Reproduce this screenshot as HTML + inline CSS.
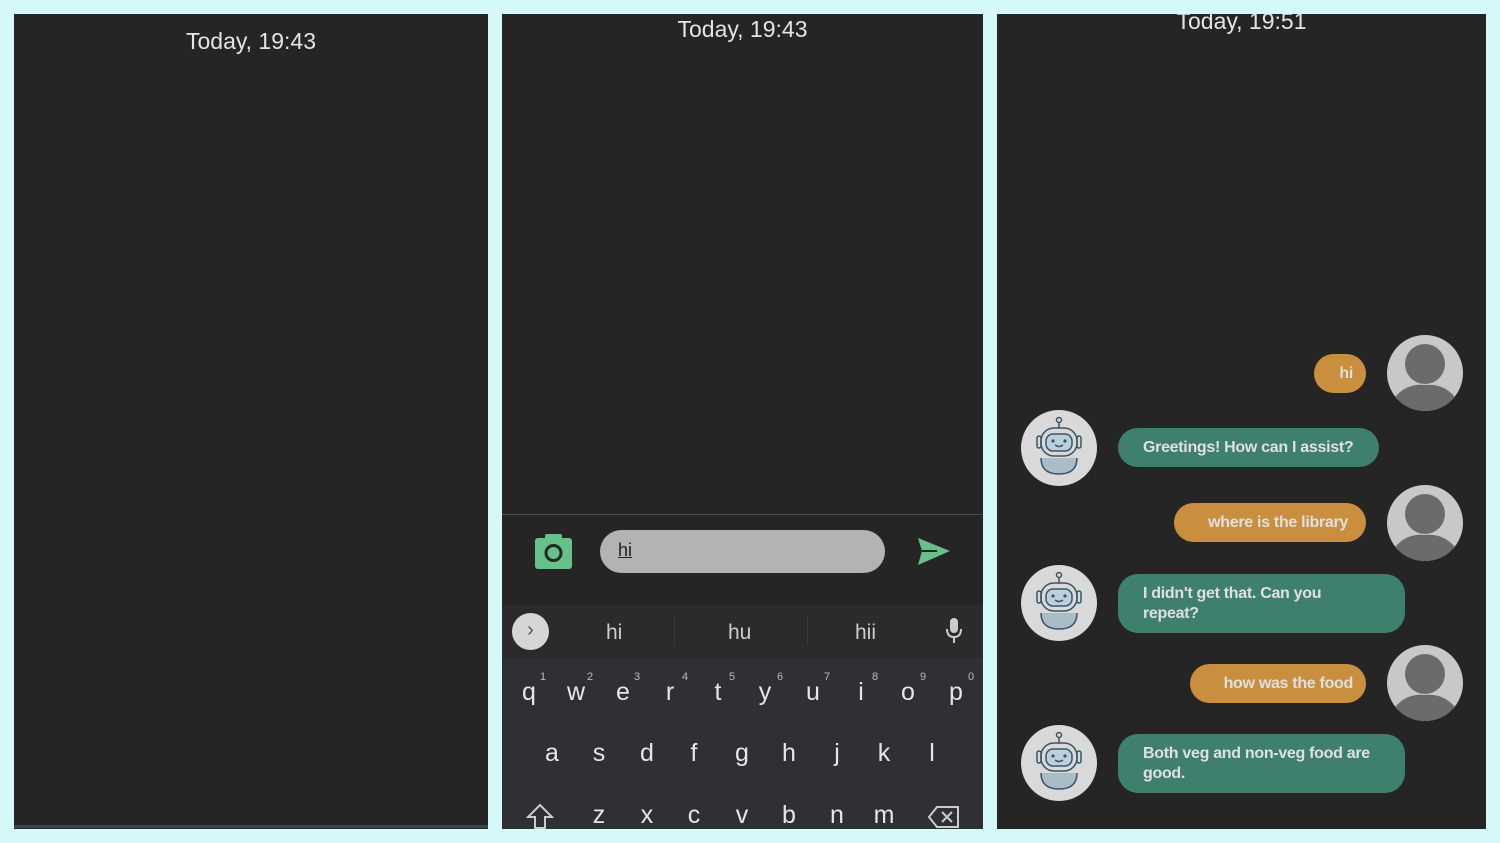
<!DOCTYPE html><html><head><style>
*{margin:0;padding:0;box-sizing:border-box}
body{width:1500px;height:843px;background:#d5f8f8;position:relative;overflow:hidden;font-family:"Liberation Sans",Roboto,sans-serif}
.p{position:absolute;background:#252525;overflow:hidden}
.a{position:absolute}
.t{position:absolute;color:#e4e4e4;font-size:23px;width:100%;text-align:center}
.b{position:absolute;border-radius:20px;color:#e0e0e0;font-weight:bold;font-size:16px;letter-spacing:-0.3px;padding:0 25px;display:flex;align-items:center;line-height:20px}
.o{background:#c98f3e;justify-content:flex-end}
.g{background:#3f7f6e}
.k{position:absolute;color:#e6e6e6;font-size:25px;width:30px;text-align:center}
.n{position:absolute;color:#bbb;font-size:11px}
</style></head><body>
<div class="p" style="left:14px;top:14px;width:474px;height:815px">
<div class="t" style="top:14px">Today, 19:43</div>
<div class="a" style="left:0;top:811px;width:474px;height:3px;background:#3a4644"></div>
</div>
<div class="p" style="left:502px;top:14px;width:481px;height:815px">
<div class="t" style="top:2px">Today, 19:43</div>
<div class="a" style="left:0;top:500px;width:481px;height:1px;background:#3d5a50"></div>
<svg class="a" style="left:33px;top:520px" width="38" height="36" viewBox="0 0 38 36"><rect x="0" y="4" width="37" height="31" rx="3" fill="#68c08a"/><rect x="10" y="0" width="17" height="7" rx="2" fill="#68c08a"/><circle cx="18.5" cy="19" r="7.5" fill="none" stroke="#1f2a22" stroke-width="3"/></svg>
<div class="a" style="left:98px;top:516px;width:285px;height:43px;border-radius:22px;background:#b3b3b3"></div>
<div class="a" style="left:116px;top:526px;font-size:18px;color:#222;text-decoration:underline">hi</div>
<svg class="a" style="left:415px;top:523px" width="34" height="30" viewBox="0 0 34 30"><path d="M1 1 L33 14 L1 28 L5 14 Z" fill="#68c08a"/><path d="M5 14 H20" stroke="#252525" stroke-width="2"/></svg>
<div class="a" style="left:0;top:591px;width:481px;height:53px;background:#2b2b2d"></div>
<div class="a" style="left:0;top:644px;width:481px;height:171px;background:#2e3034"></div>
<div class="a" style="left:10px;top:599px;width:37px;height:37px;border-radius:50%;background:#d6d6d6;color:#555;font-size:20px;text-align:center;line-height:35px">&#x203A;</div>
<div class="a" style="left:104px;top:607px;color:#ccc;font-size:21px">hi</div>
<div class="a" style="left:226px;top:607px;color:#ccc;font-size:21px">hu</div>
<div class="a" style="left:353px;top:607px;color:#ccc;font-size:21px">hii</div>
<div class="a" style="left:172px;top:603px;width:1px;height:28px;background:#3c3c3e"></div>
<div class="a" style="left:305px;top:603px;width:1px;height:28px;background:#3c3c3e"></div>
<svg class="a" style="left:443px;top:603px" width="18" height="28" viewBox="0 0 18 28"><rect x="5" y="1" width="8" height="15" rx="4" fill="#ccc"/><path d="M2 12 Q2 20 9 20 Q16 20 16 12 M9 20 V26" fill="none" stroke="#ccc" stroke-width="2"/></svg>
<div class="k" style="left:12px;top:664px">q</div><div class="n" style="left:38px;top:657px">1</div>
<div class="k" style="left:59px;top:664px">w</div><div class="n" style="left:85px;top:657px">2</div>
<div class="k" style="left:106px;top:664px">e</div><div class="n" style="left:132px;top:657px">3</div>
<div class="k" style="left:153px;top:664px">r</div><div class="n" style="left:180px;top:657px">4</div>
<div class="k" style="left:201px;top:664px">t</div><div class="n" style="left:227px;top:657px">5</div>
<div class="k" style="left:248px;top:664px">y</div><div class="n" style="left:275px;top:657px">6</div>
<div class="k" style="left:296px;top:664px">u</div><div class="n" style="left:322px;top:657px">7</div>
<div class="k" style="left:344px;top:664px">i</div><div class="n" style="left:370px;top:657px">8</div>
<div class="k" style="left:391px;top:664px">o</div><div class="n" style="left:418px;top:657px">9</div>
<div class="k" style="left:439px;top:664px">p</div><div class="n" style="left:466px;top:657px">0</div>
<div class="k" style="left:35px;top:725px">a</div><div class="k" style="left:82px;top:725px">s</div><div class="k" style="left:130px;top:725px">d</div><div class="k" style="left:177px;top:725px">f</div><div class="k" style="left:225px;top:725px">g</div><div class="k" style="left:272px;top:725px">h</div><div class="k" style="left:320px;top:725px">j</div><div class="k" style="left:367px;top:725px">k</div><div class="k" style="left:415px;top:725px">l</div>
<div class="k" style="left:82px;top:787px">z</div><div class="k" style="left:130px;top:787px">x</div><div class="k" style="left:177px;top:787px">c</div><div class="k" style="left:225px;top:787px">v</div><div class="k" style="left:272px;top:787px">b</div><div class="k" style="left:320px;top:787px">n</div><div class="k" style="left:367px;top:787px">m</div>
<svg class="a" style="left:24px;top:789px" width="28" height="26" viewBox="0 0 28 26"><path d="M14 2 L26 14 H19 V25 H9 V14 H2 Z" fill="none" stroke="#ccc" stroke-width="2"/></svg>
<svg class="a" style="left:425px;top:791px" width="34" height="24" viewBox="0 0 34 24"><path d="M10 2 H31 V22 H10 L2 12 Z" fill="none" stroke="#ccc" stroke-width="2"/><path d="M15 7 L25 17 M25 7 L15 17" stroke="#ccc" stroke-width="2"/></svg>
</div>
<div class="p" style="left:997px;top:14px;width:489px;height:815px">
<div class="t" style="top:-6px">Today, 19:51</div>
</div>
<svg width="0" height="0" style="position:absolute"><defs>
<g id="u"><circle cx="38" cy="38" r="38" fill="#c8c8c8"/><circle cx="38" cy="29" r="20" fill="#6b6b6b"/><path d="M8 62 Q20 48 38 50 Q56 48 68 62 Q55 76 38 76 Q21 76 8 62Z" fill="#6b6b6b"/></g>
<g id="r"><circle cx="38" cy="38" r="38" fill="#d9d9d9"/><g fill="none" stroke="#3b5566" stroke-width="1.5"><circle cx="38" cy="10" r="2.5"/><path d="M38 12.5 V18"/><path d="M20 48 Q20 64 38 64 Q56 64 56 48" fill="#a9bcc8"/><rect x="20" y="18" width="36" height="28" rx="13" fill="#d9d9d9"/><rect x="25" y="24" width="26" height="17" rx="7" fill="#bcd0dc"/><path d="M34 35 Q38 38 42 35"/><rect x="16" y="26" width="4" height="12" rx="2"/><rect x="56" y="26" width="4" height="12" rx="2"/></g><circle cx="32" cy="31" r="1.6" fill="#3b5566"/><circle cx="44" cy="31" r="1.6" fill="#3b5566"/></g>
</defs></svg>
<svg class="a" style="left:1387px;top:335px" width="76" height="76"><use href="#u"/></svg>
<svg class="a" style="left:1387px;top:485px" width="76" height="76"><use href="#u"/></svg>
<svg class="a" style="left:1387px;top:645px" width="76" height="76"><use href="#u"/></svg>
<svg class="a" style="left:1021px;top:410px" width="76" height="76"><use href="#r"/></svg>
<svg class="a" style="left:1021px;top:565px" width="76" height="76"><use href="#r"/></svg>
<svg class="a" style="left:1021px;top:725px" width="76" height="76"><use href="#r"/></svg>
<div class="b o" style="left:1314px;top:354px;width:52px;height:39px;padding:0 13px">hi</div>
<div class="b g" style="left:1118px;top:428px;width:261px;height:39px;white-space:nowrap;padding-right:5px">Greetings! How can I assist?</div>
<div class="b o" style="left:1174px;top:503px;width:192px;height:39px;padding-right:18px;white-space:nowrap">where is the library</div>
<div class="b g" style="left:1118px;top:574px;width:287px;height:59px;padding-right:60px">I didn't get that. Can you repeat?</div>
<div class="b o" style="left:1190px;top:664px;width:176px;height:39px;padding-right:13px;white-space:nowrap">how was the food</div>
<div class="b g" style="left:1118px;top:734px;width:287px;height:59px;padding-right:15px">Both veg and non-veg food are good.</div>
</body></html>
